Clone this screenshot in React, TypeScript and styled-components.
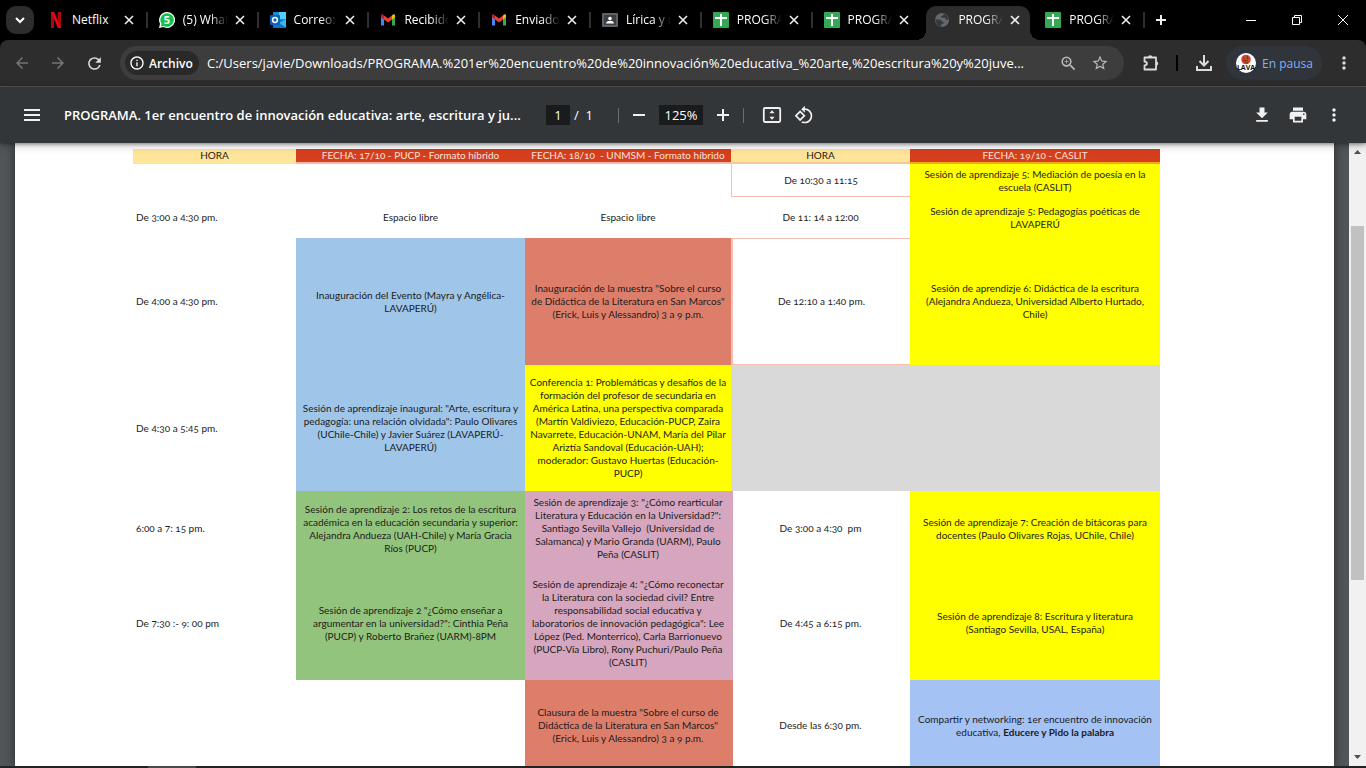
import React from "react";
import styled, { createGlobalStyle } from "styled-components";
import {
  MdArrowBack,
  MdArrowForward,
  MdRefresh,
  MdOutlineInfo,
  MdZoomIn,
  MdStarBorder,
  MdFileDownload,
  MdPrint,
  MdMoreVert,
  MdOutlineRotate90DegreesCcw,
} from "react-icons/md";

const uiFont = '"Open Sans", "Noto Sans", sans-serif';
const docFont = 'Lato, "Open Sans", sans-serif';

const GlobalStyle = createGlobalStyle`
  * { box-sizing: border-box; }
  body { margin: 0; background: #000; overflow: hidden; }
  button, input { font: inherit; color: inherit; border: 0; padding: 0; margin: 0; background: none; }
  svg { display: block; flex: none; }
`;

const Window = styled.div`
  display: flex;
  flex-direction: column;
  height: 100vh;
  font-family: ${uiFont};
  font-size: 12px;
  color: #fff;
`;

/* ---------- tab strip ---------- */

const TabStrip = styled.header`
  display: flex;
  flex: none;
  height: 40px;
  background: #000;
`;

const TabSearch = styled.button`
  display: grid;
  place-items: center;
  width: 28px;
  height: 28px;
  margin: 6px 3px 0 6px;
  border-radius: 10px;
  background: #2d2d2d;
`;

const TabList = styled.nav`
  display: flex;
  flex: 1;
  min-width: 0;
`;

const TabItem = styled.div<{ $active?: boolean; $line?: boolean }>`
  position: relative;
  display: flex;
  flex: 1;
  align-items: center;
  min-width: 0;
  margin-top: 6px;
  padding: 0 11px 6px;
  ${(p) =>
    p.$line &&
    `&::after {
      content: "";
      position: absolute;
      right: 0;
      top: 6px;
      width: 2px;
      height: 16px;
      background: #2f2f2f;
    }`}
  ${(p) =>
    p.$active &&
    `margin-left: 3px;
    margin-right: 4px;
    padding: 0 7px 6px 8px;
    border-radius: 10px 10px 0 0;
    background: #2d2d2d;
    &::before, &::after {
      content: "";
      position: absolute;
      bottom: 0;
      width: 10px;
      height: 10px;
    }
    &::before {
      left: -10px;
      background: radial-gradient(circle at 0 0, transparent 10px, #2d2d2d 10px);
    }
    &::after {
      right: -10px;
      background: radial-gradient(circle at 100% 0, transparent 10px, #2d2d2d 10px);
    }`}
`;

const TabTitle = styled.a<{ $fade: boolean }>`
  flex: 1;
  min-width: 0;
  margin-left: 8px;
  overflow: hidden;
  white-space: nowrap;
  color: #fff;
  text-decoration: none;
  line-height: 16px;
  ${(p) => p.$fade && "mask-image: linear-gradient(90deg, #000 60%, transparent);"}
`;

const TabClose = styled.button`
  display: grid;
  place-items: center;
  width: 16px;
  height: 16px;
  margin-left: 4px;
`;

const NewTab = styled.button`
  display: grid;
  place-items: center;
  width: 32px;
  margin-right: 51px;
`;

const WindowButton = styled.button`
  display: grid;
  place-items: center;
  width: 46px;
`;

/* ---------- address bar ---------- */

const Toolbar = styled.div`
  display: flex;
  flex: none;
  align-items: center;
  height: 47px;
  padding: 0 4px;
  border-bottom: 1px solid #5a5a5a;
  border-radius: 8px 8px 0 0;
  background: #2d2d2d;
`;

const NavButton = styled.button<{ $dim?: boolean }>`
  display: grid;
  place-items: center;
  width: 36px;
  height: 34px;
  color: ${(p) => (p.$dim ? "#767676" : "#dcdcdc")};
`;

const AddressBar = styled.div`
  display: flex;
  flex: 1;
  align-items: center;
  min-width: 0;
  height: 34px;
  margin: 0 9px 0 8px;
  padding: 0 8px 0 5px;
  border-radius: 17px;
  background: #3d3d3d;
`;

const SiteChip = styled.button`
  display: flex;
  align-items: center;
  gap: 4px;
  width: 74px;
  height: 24px;
  padding-left: 4px;
  border-radius: 12px;
  background: #292929;
  font-weight: 600;
`;

const UrlField = styled.input`
  flex: 1;
  min-width: 0;
  margin-left: 8px;
  font-size: 13px;
  outline: 0;
`;

const FieldButton = styled.button`
  display: grid;
  place-items: center;
  width: 32px;
  height: 32px;
  color: #b8b8b8;
`;

const BarDivider = styled.span`
  width: 2px;
  height: 16px;
  margin: 0 8px 0 7px;
  background: #000;
`;

const Profile = styled.button`
  display: flex;
  align-items: center;
  gap: 6px;
  width: 96px;
  height: 34px;
  margin: 0 4px;
  padding-left: 10px;
  border-radius: 17px;
  background: #30353c;
  color: #83aef5;
`;

/* ---------- PDF toolbar ---------- */

const PdfBar = styled.div`
  position: relative;
  z-index: 1;
  display: flex;
  flex: none;
  align-items: center;
  height: 56px;
  padding: 0 16px;
  background: #323639;
  box-shadow: 0 1px 4px rgba(0, 0, 0, 0.45), 0 2px 10px rgba(0, 0, 0, 0.2);
  font-size: 13px;
`;

const PdfStart = styled.div`
  display: flex;
  flex: 1;
  align-items: center;
  min-width: 0;
`;

const PdfEnd = styled(PdfStart)`
  justify-content: flex-end;
  gap: 4px;
`;

const PdfTitle = styled.h1`
  margin: 0 0 0 16px;
  overflow: hidden;
  white-space: nowrap;
  font-size: 13px;
  font-weight: 600;
`;

const PdfControls = styled.div`
  display: flex;
  align-items: center;
`;

const PdfButton = styled.button`
  display: grid;
  place-items: center;
  width: 32px;
  height: 32px;
  color: #f1f1f1;
`;

const PdfField = styled.input<{ $width: number }>`
  width: ${(p) => p.$width}px;
  height: 20px;
  background: #191b1c;
  text-align: center;
`;

const PageTotal = styled.span`
  width: 48px;
  padding-left: 4px;
  white-space: pre;
`;

const PdfDivider = styled.span`
  width: 1px;
  height: 15px;
  background: #6b6e70;
`;

const ZoomGroup = styled.div`
  display: flex;
  align-items: center;
  gap: 4px;
  margin: 0 4px;
`;

const FitGroup = styled.div`
  display: flex;
  margin-left: 12px;
`;

/* ---------- document ---------- */

const Viewer = styled.main`
  display: flex;
  flex: 1;
  min-height: 0;
  overflow: hidden;
  background: #525659;
`;

const Sheet = styled.section`
  flex: 1;
  min-width: 0;
  margin: 0 15px;
  padding: 6px 174px 0 118px;
  background: #fff;
  box-shadow: 0 0 10px rgba(0, 0, 0, 0.55);
`;

const Schedule = styled.table`
  width: 100%;
  table-layout: fixed;
  border-collapse: separate;
  border-spacing: 0;
  color: #1c1c1c;
  font-family: ${docFont};
  font-size: 10px;
  font-variant-numeric: oldstyle-nums;
  line-height: 13px;
`;

const Column = styled.col<{ $width?: number }>`
  ${(p) => p.$width && `width: ${p.$width}px;`}
`;

const Row = styled.tr<{ $height: number }>`
  height: ${(p) => p.$height}px;
`;

const HeadCell = styled.th<{ $bg: string; $line: string; $color?: string }>`
  padding: 0;
  border-bottom: 2px solid ${(p) => p.$line};
  background: ${(p) => p.$bg};
  color: ${(p) => p.$color || "#1c1c1c"};
  font-weight: 400;
  white-space: pre;
`;

const Cell = styled.td<{ $bg?: string; $left?: boolean; $lines?: string; $bleed?: boolean }>`
  padding: 0 3px;
  background: ${(p) => p.$bg || "transparent"};
  text-align: ${(p) => (p.$left ? "left" : "center")};
  vertical-align: middle;
  white-space: pre;
  ${(p) => p.$lines && `border-style: solid; border-color: #f6beb3; border-width: ${p.$lines};`}
  ${(p) => p.$bleed && `box-shadow: 2px 0 0 ${p.$bg};`}
`;

const ScrollTrack = styled.aside`
  display: flex;
  flex-direction: column;
  align-items: center;
  width: 17px;
  padding: 6px 0;
  background: #f1f1f1;
`;

const ScrollThumb = styled.div`
  width: 13px;
  height: 58%;
  margin: 72px 0 auto;
  background: #c1c1c1;
`;

const Taskbar = styled.footer`
  flex: none;
  height: 2px;
  padding-left: 148px;
  background: #222;
`;

const TaskbarItem = styled.div`
  width: 48px;
  height: 2px;
  background: #4a4a4a;
`;

/* ---------- icons ---------- */

const NetflixIcon = () => (
  <svg width="16" height="16" viewBox="0 0 16 16">
    <rect x="3" width="3" height="16" fill="#b1060f" />
    <rect x="10" width="3" height="16" fill="#b1060f" />
    <path d="M3 0h3l7 16h-3z" fill="#e50914" />
  </svg>
);

const WhatsAppIcon = () => (
  <svg width="16" height="16" viewBox="0 0 16 16">
    <path d="M8 0a8 8 0 1 1-3.600 15.100L0 16l1-4.200A8 8 0 0 1 8 0z" fill="#fff" />
    <path d="M8 1.200a6.800 6.800 0 1 1-3.400 12.700l-2.900.7.800-2.900A6.800 6.800 0 0 1 8 1.200z" fill="#12c04a" />
    <text x="8" y="12" textAnchor="middle" fontSize="11" fontWeight="700" fill="#fff">5</text>
  </svg>
);

const OutlookIcon = () => (
  <svg width="16" height="16" viewBox="0 0 16 16">
    <rect x="3" width="13" height="9" fill="#1a8ad8" />
    <rect x="9" width="7" height="7" fill="#50d0f8" />
    <path d="M3 8h13v7a1 1 0 0 1-1 1H4a1 1 0 0 1-1-1z" fill="#1272c8" />
    <path d="M16 7v8.500L9 11z" fill="#35b8f1" />
    <rect y="3" width="10" height="10" rx="1" fill="#0a62b8" />
    <circle cx="5" cy="8" r="2.400" fill="none" stroke="#fff" strokeWidth="1.500" />
  </svg>
);

const GmailIcon = () => (
  <svg width="16" height="16" viewBox="0 0 16 16">
    <path d="M1 4v9.500h3V6z" fill="#4285f4" />
    <path d="M12 6v7.500h3V4z" fill="#34a853" />
    <path d="M12 3.500l1.200-.9C14 2 15 2.600 15 3.700v1.500l-3 2.300z" fill="#fbbc04" />
    <path d="M4 3.500l4 3 4-3v4l-4 3-4-3z" fill="#ea4335" />
    <path d="M1 5.200V3.700C1 2.600 2 2 2.800 2.600l1.200.9v4z" fill="#c5221f" />
  </svg>
);

const ClassroomIcon = () => (
  <svg width="16" height="16" viewBox="0 0 16 16">
    <rect y="1" width="16" height="14" rx="1" fill="#5f6368" />
    <rect x="2" y="3" width="12" height="10" fill="#3c4043" />
    <circle cx="8" cy="6.500" r="1.800" fill="#fff" />
    <path d="M4 11.500c0-2 2.500-2.700 4-2.700s4 .7 4 2.700z" fill="#fff" />
  </svg>
);

const SheetsIcon = () => (
  <svg width="16" height="16" viewBox="0 0 16 16">
    <rect width="16" height="16" rx="1" fill="#34a853" />
    <path d="M7 2h2v3h5v2H9v7H7V7H2V5h5z" fill="#fff" />
  </svg>
);

const GlobeIcon = () => (
  <svg width="16" height="16" viewBox="0 0 16 16">
    <circle cx="8" cy="8" r="7" fill="#64686c" />
    <path
      d="M1.500 7.500h3.700c1.800 0 2.600 1 2.600 2.300H9.500v2H7.300v2.700C4 14.500 1.500 11.500 1.500 7.500zM9.500 1.700c0 1.600-.5 2.300-2.200 2.300v1.800h4.200v2h3C14.700 4.800 12.500 2.300 9.500 1.700z"
      fill="#36393b"
    />
  </svg>
);

const CloseIcon = () => (
  <svg width="10" height="10" viewBox="0 0 10 10" stroke="#eee" strokeWidth="1.600">
    <path d="M1 1l8 8M9 1l-8 8" />
  </svg>
);

const TrayDownloadIcon = () => (
  <svg width="18" height="18" viewBox="0 0 18 18" fill="none" stroke="currentColor" strokeWidth="2">
    <path d="M9 1v10M4.500 7L9 11.500 13.500 7M2 12v4h14v-4" />
  </svg>
);

const ExtensionIcon = () => (
  <svg width="18" height="18" viewBox="0 0 18 18">
    <path
      d="M2.500 3.500h11.500v12H2.500v-4c1.800-.2 2.400-1 2.400-2s-.6-1.800-2.400-2z"
      fill="none"
      stroke="currentColor"
      strokeWidth="1.800"
      strokeLinejoin="round"
    />
    <path d="M6 3.500a2.200 2.200 0 0 1 4.400 0zM14 7.300a2.200 2.200 0 0 1 0 4.400z" fill="currentColor" />
  </svg>
);

const FitPageIcon = () => (
  <svg width="20" height="16" viewBox="0 0 20 16">
    <rect x="1.800" y="1" width="16.400" height="14" rx="1.200" fill="none" stroke="currentColor" strokeWidth="1.800" />
    <path d="M10 3.300l2.600 3H7.400zM10 12.700l2.600-3H7.400z" fill="currentColor" />
  </svg>
);

const AvatarIcon = () => (
  <svg width="20" height="20" viewBox="0 0 20 20">
    <circle cx="10" cy="10" r="10" fill="#fff" />
    <circle cx="10" cy="6.500" r="4.800" fill="#cf4a2b" />
    <path d="M7 4l2 2M11 3l1 3M7 8l5-1M9 9l3 1" stroke="#7d2c18" strokeWidth="1" />
    <text x="10" y="17" textAnchor="middle" fontSize="7" fontWeight="700" fill="#111">LAVA</text>
  </svg>
);

const tabs = [
  { title: "Netflix", icon: <NetflixIcon />, line: true },
  { title: "(5) WhatsApp", icon: <WhatsAppIcon />, line: true },
  { title: "Correo: Javier", icon: <OutlookIcon />, line: true },
  { title: "Recibidos", icon: <GmailIcon />, line: true },
  { title: "Enviados", icon: <GmailIcon />, line: true },
  { title: "Lírica y narrativa", icon: <ClassroomIcon />, line: true },
  { title: "PROGRAMA", icon: <SheetsIcon />, line: true },
  { title: "PROGRAMA", icon: <SheetsIcon /> },
  { title: "PROGRAMA", icon: <GlobeIcon />, active: true },
  { title: "PROGRAMA", icon: <SheetsIcon />, line: true },
];

const blue = "#9fc5e8";
const coral = "#dd7e6b";
const yellow = "#ffff00";
const green = "#93c47d";
const mauve = "#d5a6bd";
const gray = "#d9d9d9";
const sky = "#a4c2f4";
const red = "#d53f1d";
const sand = "#ffe599";

export default function App() {
  return (
    <Window>
      <GlobalStyle />
      <TabStrip>
        <TabSearch aria-label="Buscar pestañas">
          <svg width="10" height="10" viewBox="0 0 10 10" fill="none" stroke="#fff" strokeWidth="2">
            <path d="M1 3l4 4 4-4" />
          </svg>
        </TabSearch>
        <TabList>
          {tabs.map((t, i) => (
            <TabItem key={i} $active={t.active} $line={t.line}>
              {t.icon}
              <TabTitle href="#" $fade={i > 0}>{t.title}</TabTitle>
              <TabClose aria-label="Cerrar pestaña"><CloseIcon /></TabClose>
            </TabItem>
          ))}
        </TabList>
        <NewTab aria-label="Nueva pestaña">
          <svg width="12" height="12" viewBox="0 0 12 12" stroke="#eee" strokeWidth="2">
            <path d="M6 1v10M1 6h10" />
          </svg>
        </NewTab>
        <WindowButton aria-label="Minimizar">
          <svg width="10" height="10" viewBox="0 0 10 10"><rect y="5" width="10" height="1" fill="#fff" /></svg>
        </WindowButton>
        <WindowButton aria-label="Restaurar">
          <svg width="10" height="10" viewBox="0 0 10 10" fill="none" stroke="#fff">
            <path d="M.5 2.500h7v7h-7zM2.500 2.500v-2h7v7h-2" />
          </svg>
        </WindowButton>
        <WindowButton aria-label="Cerrar">
          <svg width="10" height="10" viewBox="0 0 10 10" stroke="#fff"><path d="M0 0l10 10M10 0L0 10" /></svg>
        </WindowButton>
      </TabStrip>

      <Toolbar>
        <NavButton $dim aria-label="Atrás"><MdArrowBack size={18} /></NavButton>
        <NavButton $dim aria-label="Adelante"><MdArrowForward size={18} /></NavButton>
        <NavButton aria-label="Volver a cargar"><MdRefresh size={19} /></NavButton>
        <AddressBar>
          <SiteChip><MdOutlineInfo size={16} />Archivo</SiteChip>
          <UrlField
            aria-label="Dirección"
            defaultValue="C:/Users/javie/Downloads/PROGRAMA.%201er%20encuentro%20de%20innovación%20educativa_%20arte,%20escritura%20y%20juve..."
          />
          <FieldButton aria-label="Zoom"><MdZoomIn size={19} /></FieldButton>
          <FieldButton aria-label="Favorito"><MdStarBorder size={18} /></FieldButton>
        </AddressBar>
        <NavButton aria-label="Extensiones"><ExtensionIcon /></NavButton>
        <BarDivider />
        <NavButton aria-label="Descargas"><TrayDownloadIcon /></NavButton>
        <Profile><AvatarIcon />En pausa</Profile>
        <NavButton aria-label="Menú"><MdMoreVert size={20} /></NavButton>
      </Toolbar>

      <PdfBar>
        <PdfStart>
          <PdfButton aria-label="Panel lateral">
            <svg width="16" height="12" viewBox="0 0 16 12" fill="currentColor">
              <path d="M0 0h16v2H0zM0 5h16v2H0zM0 10h16v2H0z" />
            </svg>
          </PdfButton>
          <PdfTitle>PROGRAMA. 1er encuentro de innovación educativa: arte, escritura y ju...</PdfTitle>
        </PdfStart>
        <PdfControls>
          <PdfField $width={24} aria-label="Página" defaultValue="1" />
          <PageTotal>/  1</PageTotal>
          <PdfDivider />
          <ZoomGroup>
            <PdfButton aria-label="Alejar">
              <svg width="12" height="12" viewBox="0 0 12 12"><path d="M0 5h12v2H0z" fill="currentColor" /></svg>
            </PdfButton>
            <PdfField $width={44} aria-label="Nivel de zoom" defaultValue="125%" />
            <PdfButton aria-label="Acercar">
              <svg width="12" height="12" viewBox="0 0 12 12"><path d="M5 0h2v5h5v2H7v5H5V7H0V5h5z" fill="currentColor" /></svg>
            </PdfButton>
          </ZoomGroup>
          <PdfDivider />
          <FitGroup>
            <PdfButton aria-label="Ajustar a la página"><FitPageIcon /></PdfButton>
            <PdfButton aria-label="Girar"><MdOutlineRotate90DegreesCcw size={20} /></PdfButton>
          </FitGroup>
        </PdfControls>
        <PdfEnd>
          <PdfButton aria-label="Descargar"><MdFileDownload size={20} /></PdfButton>
          <PdfButton aria-label="Imprimir"><MdPrint size={20} /></PdfButton>
          <PdfButton aria-label="Más acciones"><MdMoreVert size={20} /></PdfButton>
        </PdfEnd>
      </PdfBar>

      <Viewer>
        <Sheet>
          <Schedule>
            <colgroup>
              <Column $width={163} />
              <Column $width={229} />
              <Column $width={206} />
              <Column $width={179} />
              <Column />
            </colgroup>
            <thead>
              <Row $height={15}>
                <HeadCell $bg={sand} $line={sand}>HORA</HeadCell>
                <HeadCell $bg={red} $line="#f2b8ab" $color="#fbe3dc">FECHA: 17/10 - PUCP - Formato híbrido</HeadCell>
                <HeadCell $bg={red} $line="#f2b8ab" $color="#fbe3dc">{"FECHA: 18/10  - UNMSM - Formato híbrido"}</HeadCell>
                <HeadCell $bg={sand} $line="#fac795">HORA</HeadCell>
                <HeadCell $bg={red} $line="#efae1e" $color="#fbe3dc">FECHA: 19/10 - CASLIT</HeadCell>
              </Row>
            </thead>
            <tbody>
              <Row $height={33}>
                <Cell />
                <Cell />
                <Cell />
                <Cell $lines="0 0 1px 1px">De 10:30 a 11:15</Cell>
                <Cell $bg={yellow}>{"Sesión de aprendizaje 5: Mediación de poesía en la\nescuela (CASLIT)"}</Cell>
              </Row>
              <Row $height={41}>
                <Cell $left>De 3:00 a 4:30 pm.</Cell>
                <Cell>Espacio libre</Cell>
                <Cell>Espacio libre</Cell>
                <Cell>De 11: 14 a 12:00</Cell>
                <Cell $bg={yellow}>{"Sesión de aprendizaje 5: Pedagogías poéticas de\nLAVAPERÚ"}</Cell>
              </Row>
              <Row $height={127}>
                <Cell $left>De 4:00 a 4:30 pm.</Cell>
                <Cell $bg={blue}>{"Inauguración del Evento (Mayra y Angélica-\nLAVAPERÚ)"}</Cell>
                <Cell $bg={coral}>{'Inauguración de la muestra "Sobre el curso\nde Didáctica de la Literatura en San Marcos"\n(Erick, Luis y Alessandro) 3 a 9 p.m.'}</Cell>
                <Cell $lines="1px 0 1px 2px">De 12:10 a 1:40 pm.</Cell>
                <Cell $bg={yellow}>{"Sesión de aprendizje 6: Didáctica de la escritura\n(Alejandra Andueza, Universidad Alberto Hurtado,\nChile)"}</Cell>
              </Row>
              <Row $height={126}>
                <Cell $left>De 4:30 a 5:45 pm.</Cell>
                <Cell $bg={blue}>{'Sesión de aprendizaje inaugural: "Arte, escritura y\npedagogía: una relación olvidada": Paulo Olivares\n(UChile-Chile) y Javier Suárez (LAVAPERÚ-\nLAVAPERÚ)'}</Cell>
                <Cell $bg={yellow}>{"Conferencia 1: Problemáticas y desafíos de la\nformación del profesor de secundaria en\nAmérica Latina, una perspectiva comparada\n(Martín Valdiviezo, Educación-PUCP, Zaira\nNavarrete, Educación-UNAM, María del Pilar\nAriztía Sandoval (Educación-UAH);\nmoderador: Gustavo Huertas (Educación-\nPUCP)"}</Cell>
                <Cell $bg={gray} />
                <Cell $bg={gray} />
              </Row>
              <Row $height={75}>
                <Cell $left>6:00 a 7: 15 pm.</Cell>
                <Cell $bg={green}>{"Sesión de aprendizaje 2: Los retos de la escritura\nacadémica en la educación secundaria y superior:\nAlejandra Andueza (UAH-Chile) y María Gracia\nRíos (PUCP)"}</Cell>
                <Cell $bg={mauve} $bleed>{'Sesión de aprendizaje 3: "¿Cómo rearticular\nLiteratura y Educación en la Universidad?":\nSantiago Sevilla Vallejo  (Universidad de\nSalamanca) y Mario Granda (UARM), Paulo\nPeña (CASLIT)'}</Cell>
                <Cell>{"De 3:00 a 4:30  pm"}</Cell>
                <Cell $bg={yellow}>{"Sesión de aprendizaje 7: Creación de bitácoras para\ndocentes (Paulo Olivares Rojas, UChile, Chile)"}</Cell>
              </Row>
              <Row $height={114}>
                <Cell $left>De 7:30 :- 9: 00 pm</Cell>
                <Cell $bg={green}>{'Sesión de aprendizaje 2 "¿Cómo enseñar a\nargumentar en la universidad?": Cinthia Peña\n(PUCP) y Roberto Brañez (UARM)-8PM'}</Cell>
                <Cell $bg={mauve} $bleed>{'Sesión de aprendizaje 4: "¿Cómo reconectar\nla Literatura con la sociedad civil? Entre\nresponsabilidad social educativa y\nlaboratorios de innovación pedagógica": Lee\nLópez (Ped. Monterrico), Carla Barrionuevo\n(PUCP-Vía Libro), Rony Puchuri/Paulo Peña\n(CASLIT)'}</Cell>
                <Cell>De 4:45 a 6:15 pm.</Cell>
                <Cell $bg={yellow}>{"Sesión de aprendizaje 8: Escritura y literatura\n(Santiago Sevilla, USAL, España)"}</Cell>
              </Row>
              <Row $height={91}>
                <Cell />
                <Cell />
                <Cell $bg={coral} $bleed>{'Clausura de la muestra "Sobre el curso de\nDidáctica de la Literatura en San Marcos"\n(Erick, Luis y Alessandro) 3 a 9 p.m.'}</Cell>
                <Cell>Desde las 6:30 pm.</Cell>
                <Cell $bg={sky}>{"Compartir y networking: 1er encuentro de innovación\neducativa, "}<b>Educere y Pido la palabra</b></Cell>
              </Row>
            </tbody>
          </Schedule>
        </Sheet>
        <ScrollTrack>
          <svg width="7" height="5" viewBox="0 0 7 5"><path d="M3.500 1L7 5H0z" fill="#505050" /></svg>
          <ScrollThumb />
          <svg width="7" height="5" viewBox="0 0 7 5"><path d="M0 0h7L3.500 4z" fill="#505050" /></svg>
        </ScrollTrack>
      </Viewer>
      <Taskbar><TaskbarItem /></Taskbar>
    </Window>
  );
}
